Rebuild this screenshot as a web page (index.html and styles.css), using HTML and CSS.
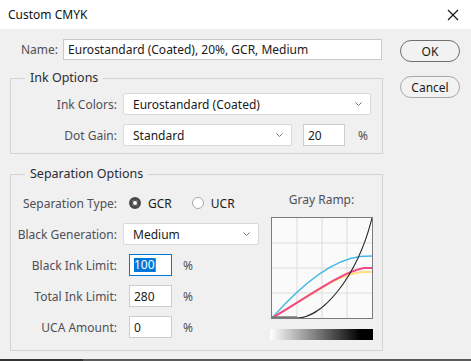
FILE: index.html
```html
<!DOCTYPE html>
<html lang="en">
<head>
  <meta charset="UTF-8">
  <title>Custom CMYK</title>
  <link rel="stylesheet" href="styles.css">
</head>
<body>

  <div class="titlebar">
    <span class="title">Custom CMYK</span>
    <svg class="close" width="12" height="12" viewBox="0 0 12 12">
      <path d="M1 1 L11 11 M11 1 L1 11" stroke="#111" stroke-width="1.1" fill="none"/>
    </svg>
  </div>

  <div class="dialog">
    <div class="main">
      <div class="name-row">
        <label for="name">Name:</label>
        <input type="text" id="name" class="field" value="Eurostandard (Coated), 20%, GCR, Medium">
      </div>

      <fieldset class="group ink">
        <legend>Ink Options</legend>
        <div class="rows">
          <label>Ink Colors:</label>
          <div class="select wide">
            <span>Eurostandard (Coated)</span>
            <svg width="9" height="6" viewBox="0 0 9 6"><path d="M1.5 1.5 L4.5 4.5 L7.5 1.5" stroke="#777" fill="none"/></svg>
          </div>

          <label>Dot Gain:</label>
          <div class="line">
            <div class="select gain">
              <span>Standard</span>
              <svg width="9" height="6" viewBox="0 0 9 6"><path d="M1.5 1.5 L4.5 4.5 L7.5 1.5" stroke="#777" fill="none"/></svg>
            </div>
            <div class="box gain-box">20</div>
            <span class="pct gain-pct">%</span>
          </div>
        </div>
      </fieldset>

      <fieldset class="group sep">
        <legend>Separation Options</legend>
        <div class="sep-body">
          <div class="rows sep-rows">
            <label>Separation Type:</label>
            <div class="line radios">
              <span class="radio checked"></span><span class="radio-label">GCR</span>
              <span class="radio"></span><span class="radio-label">UCR</span>
            </div>

            <label>Black Generation:</label>
            <div class="select gen">
              <span>Medium</span>
              <svg width="9" height="6" viewBox="0 0 9 6"><path d="M1.5 1.5 L4.5 4.5 L7.5 1.5" stroke="#777" fill="none"/></svg>
            </div>

            <label>Black Ink Limit:</label>
            <div class="line">
              <div class="box limit focused"><span class="selected">100</span><span class="caret"></span></div>
              <span class="pct">%</span>
            </div>

            <label>Total Ink Limit:</label>
            <div class="line">
              <div class="box limit">280</div>
              <span class="pct">%</span>
            </div>

            <label>UCA Amount:</label>
            <div class="line">
              <div class="box limit">0</div>
              <span class="pct">%</span>
            </div>
          </div>

          <div class="ramp">
            <div class="ramp-title">Gray Ramp:</div>
            <svg class="graph" width="102" height="102" viewBox="0 0 100 100" preserveAspectRatio="none">
              <rect x="0" y="0" width="100" height="100" fill="#fafafa"/>
              <path d="M25 0 V100 M50 0 V100 M75 0 V100 M0 25 H100 M0 50 H100 M0 75 H100" stroke="#dcdcdc" stroke-width="1" fill="none"/>
              <path d="M0 100 C 30 66 60 42 88 38.5 L100 38" stroke="#45b9e3" stroke-width="1.3" fill="none"/>
              <path d="M0 100 C 40 77 65 56 90 54 L100 54" stroke="#fbe07c" stroke-width="2" fill="none"/>
              <path d="M0 100 C 40 76 70 54 92 50 L100 50" stroke="#f24a84" stroke-width="2" fill="none"/>
              <path d="M0 99.5 L25 99.5" stroke="#7a7a7a" stroke-width="2.5" fill="none"/>
              <path d="M25 100 C 50 100 85 60 100 0" stroke="#2a2a2a" stroke-width="1.1" fill="none"/>
            </svg>
            <div class="gradient"></div>
          </div>
        </div>
      </fieldset>
    </div>

    <div class="buttons">
      <button class="btn default">OK</button>
      <button class="btn">Cancel</button>
    </div>
  </div>

  <div class="edge"></div>

</body>
</html>
```

FILE: styles.css
```css
body {
  margin: 0;
  padding: 0;
  font-family: "Noto Sans", Arial, sans-serif;
  font-size: 12px;
  background-color: #f0f0f0;
  color: #4f4f55;
  width: 471px;
  height: 361px;
  overflow: hidden;
}

.titlebar {
  height: 29px;
  background-color: #fff;
  display: flex;
  align-items: center;
  justify-content: space-between;
  padding: 0 9px 0 8px;
  box-sizing: border-box;
}

.title {
  color: #111;
  font-size: 12px;
}

.close {
  margin-right: 3px;
}

.dialog {
  display: flex;
  padding: 10px 0 9px 10px;
  height: 330px;
  box-sizing: border-box;
}

.main {
  width: 373px;
}

.name-row {
  display: flex;
  align-items: center;
  gap: 5px;
  padding-left: 11px;
  margin-right: 1px;
}

.field {
  flex: 1;
  height: 21px;
  box-sizing: border-box;
  border: 1px solid #c9c9c9;
  background: #fff;
  font-family: inherit;
  font-size: 12px;
  color: #1a1a1a;
  padding: 0 4px;
  outline: none;
}

.group {
  margin: 10px 0 0 0;
  padding: 0;
  border: 1px solid #d4d4d4;
  min-width: 0;
}

.group.sep {
  margin-top: 12px;
}

.group legend {
  margin-left: 14px;
  padding: 0 5px;
  line-height: 16px;
  color: #2c2c34;
  font-size: 12.5px;
}

.rows {
  display: grid;
  grid-template-columns: 106px auto;
  column-gap: 6px;
  row-gap: 9px;
  align-items: center;
}

.rows label {
  text-align: right;
  white-space: nowrap;
}

.ink .rows {
  padding: 7px 0 7px 0;
}

.line {
  display: flex;
  align-items: center;
}

.select {
  height: 22px;
  box-sizing: border-box;
  background: #fff;
  border: 1px solid #d9d9d9;
  border-radius: 2px;
  display: flex;
  align-items: center;
  justify-content: space-between;
  padding: 0 7px 0 9px;
  color: #1a1a1a;
  font-size: 12px;
}

.wide {
  width: 248px;
}

.gain {
  width: 169px;
}

.gen {
  width: 136px;
}

.box {
  height: 22px;
  box-sizing: border-box;
  background: #fff;
  border: 1px solid #cdcdcd;
  display: flex;
  align-items: center;
  padding: 0 4px;
  color: #1a1a1a;
  font-size: 12px;
}

.gain-box {
  width: 42px;
  margin-left: 11px;
}

.pct {
  margin-left: 11px;
  color: #4f4f55;
  font-size: 12px;
}

.gain-pct {
  margin-left: 13px;
}

.sep-body {
  display: flex;
  justify-content: space-between;
  padding: 10px 9px 10px 0;
}

.sep-rows {
  align-self: flex-start;
  grid-template-rows: repeat(5, 22px);
}

.radios {
  margin-left: 6px;
}

.radio {
  width: 12px;
  height: 12px;
  box-sizing: border-box;
  border-radius: 50%;
  border: 1px solid #a8a8a8;
  background: #fff;
}

.radio.checked {
  border: 3px solid #4a4a4a;
  background: #fff;
  box-shadow: inset 0 0 0 1px #4a4a4a;
}

.radio-label {
  margin-left: 7px;
  margin-right: 20px;
  color: #1a1a1a;
  font-size: 12px;
}

.limit {
  width: 43px;
  margin-left: 6px;
}

.focused {
  border-color: #0078d7;
  padding-left: 4px;
}

.selected {
  background-color: #0078d7;
  color: #fff;
  line-height: 14px;
}

.caret {
  width: 1px;
  height: 14px;
  background: #e07000;
}

.ramp {
  width: 103px;
  display: flex;
  flex-direction: column;
  align-items: center;
}

.ramp-title {
  font-size: 12px;
  line-height: 16px;
  margin-bottom: 9px;
}

.graph {
  display: block;
  border: 1px solid #7c7c7c;
  box-sizing: border-box;
  width: 102px;
  height: 102px;
}

.gradient {
  width: 103px;
  height: 11px;
  margin-top: 10px;
  background: linear-gradient(to right, #fff 0%, #000 88%, #000 100%);
}

.buttons {
  display: flex;
  flex-direction: column;
  gap: 14px;
  margin-left: 17px;
  padding-top: 1px;
}

.btn {
  width: 60px;
  height: 22px;
  border-radius: 11px;
  border: 1px solid #a9a9a9;
  background-color: #f2f2f2;
  font-family: inherit;
  font-size: 12px;
  color: #1a1a1a;
  padding: 0;
  cursor: pointer;
}

.btn.default {
  border-color: #6f6f6f;
}

.edge {
  height: 2px;
  background: linear-gradient(to right, #333 0px, #333 83px, #5a5a5a 83px);
}
```
